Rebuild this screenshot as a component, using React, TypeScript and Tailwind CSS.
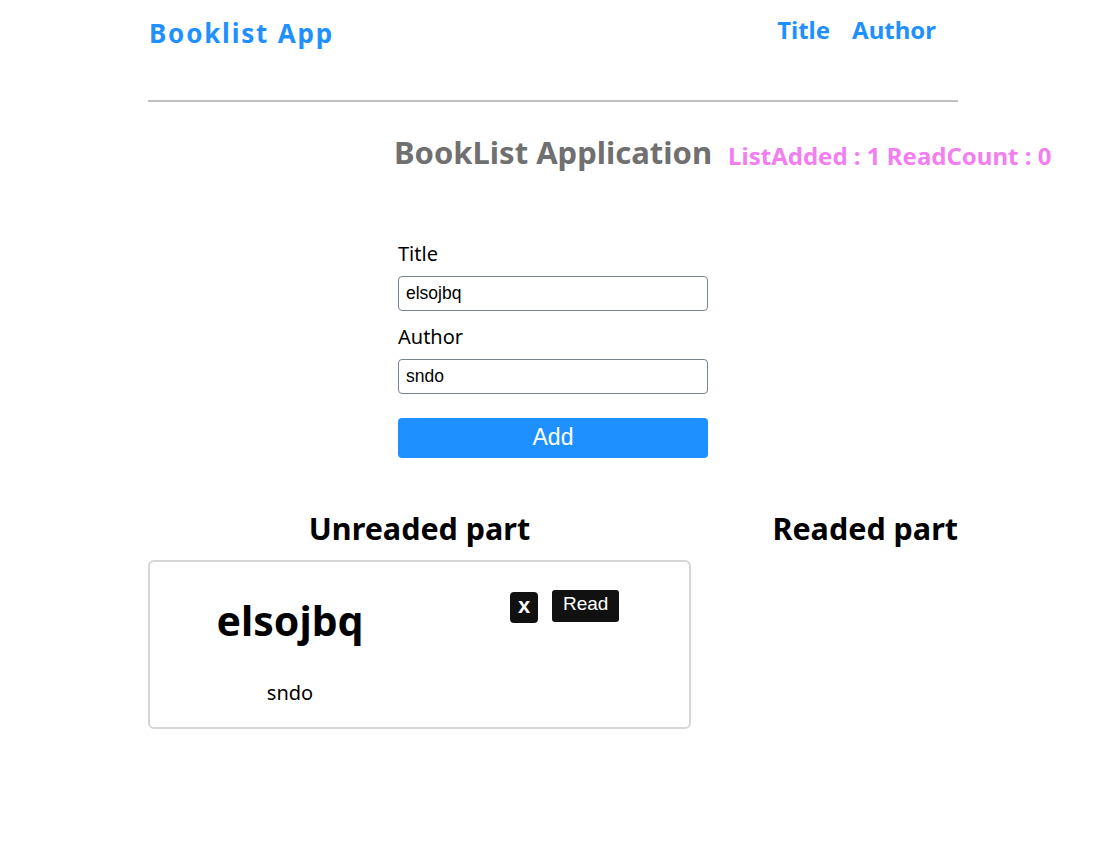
import { useState } from 'react';

type Book = { id: number; title: string; author: string; read: boolean };

export default function App() {
  const [title, setTitle] = useState('elsojbq');
  const [author, setAuthor] = useState('sndo');
  const [books, setBooks] = useState<Book[]>([{ id: 1, title: 'elsojbq', author: 'sndo', read: false }]);

  const unread = books.filter((b) => !b.read);
  const readed = books.filter((b) => b.read);

  const addBook = () => {
    if (!title || !author) return;
    setBooks([...books, { id: Date.now(), title, author, read: false }]);
  };

  return (
    <div className="min-h-screen bg-white" style={{ fontFamily: '"Noto Sans", "Open Sans", sans-serif' }}>
      <div className="w-[810px] ml-[148px]">
        {/* Header */}
        <div className="flex items-start justify-between pt-[14px] pr-[22px]">
          <h1 className="text-[26px] font-bold tracking-[1.8px] text-[#1e90ff] pl-px">Booklist App</h1>
          <nav className="flex gap-[22px] text-[24px] font-bold text-[#1e90ff] -mt-[2px]">
            <a>Title</a>
            <a>Author</a>
          </nav>
        </div>
        <hr className="mt-[47px] border-t-2 border-[#c0c0c0]" />

        {/* Title + counter */}
        <div className="flex justify-center mt-[27px]">
          <div className="relative">
            <h2 className="text-[31px] font-bold text-[#707070]">BookList Application</h2>
            <span className="absolute left-full top-[9px] ml-[16px] whitespace-nowrap text-[24px] font-bold text-[#f37ef0]">
              ListAdded : {books.length} ReadCount : {readed.length}
            </span>
          </div>
        </div>

        {/* Form */}
        <div className="w-[310px] mx-auto mt-[64px] flex flex-col">
          <label className="text-[20px] text-black leading-[28px]">Title</label>
          <input
            value={title}
            onChange={(e) => setTitle(e.target.value)}
            className="mt-[8px] h-[35px] border border-[#768391] rounded-[4px] px-[7px] text-[17.5px] text-black"
            style={{ fontFamily: '"Liberation Sans", Arial, sans-serif' }}
          />
          <label className="mt-[12px] text-[20px] text-black leading-[28px]">Author</label>
          <input
            value={author}
            onChange={(e) => setAuthor(e.target.value)}
            className="mt-[8px] h-[35px] border border-[#768391] rounded-[4px] px-[7px] text-[17.5px] text-black"
            style={{ fontFamily: '"Liberation Sans", Arial, sans-serif' }}
          />
          <button
            onClick={addBook}
            className="mt-[24px] h-[40px] rounded-[4px] bg-[#1e90ff] text-white text-[23px]"
            style={{ fontFamily: '"Liberation Sans", Arial, sans-serif' }}
          >
            Add
          </button>
        </div>

        {/* Lists */}
        <div className="flex mt-[48px]">
          <div className="w-[543px]">
            <h3 className="text-center text-[30.5px] font-bold text-black leading-[44px]">Unreaded part</h3>
            <div className="mt-[10px] flex flex-col gap-3">
              {unread.map((b) => (
                <div key={b.id} className="h-[169px] border-2 border-[#d6d6d6] rounded-[6px] flex">
                  <div className="w-[280px] flex flex-col items-center pt-[30px]">
                    <div className="text-[41px] font-bold text-black leading-[56px]">{b.title}</div>
                    <div className="mt-[30px] text-[20px] text-black">{b.author}</div>
                  </div>
                  <div className="flex items-start gap-[14px] ml-[80px] pt-[28px]">
                    <button
                      onClick={() => setBooks(books.filter((x) => x.id !== b.id))}
                      className="mt-[2px] w-[28px] h-[31px] rounded-[4px] bg-[#111] text-white text-[22px] font-bold leading-none pb-[2px]"
                      style={{ fontFamily: '"Liberation Sans", Arial, sans-serif' }}
                    >
                      x
                    </button>
                    <button
                      onClick={() => setBooks(books.map((x) => (x.id === b.id ? { ...x, read: true } : x)))}
                      className="h-[32px] px-[11px] rounded-[3px] bg-[#111] text-white text-[19px] leading-none pb-[4px]"
                      style={{ fontFamily: '"Liberation Sans", Arial, sans-serif' }}
                    >
                      Read
                    </button>
                  </div>
                </div>
              ))}
            </div>
          </div>
          <div className="flex-1 text-right">
            <h3 className="text-[30.5px] font-bold text-black leading-[44px]">Readed part</h3>
            {readed.map((b) => (
              <div key={b.id} className="text-[20px]">{b.title}</div>
            ))}
          </div>
        </div>
      </div>
    </div>
  );
}
